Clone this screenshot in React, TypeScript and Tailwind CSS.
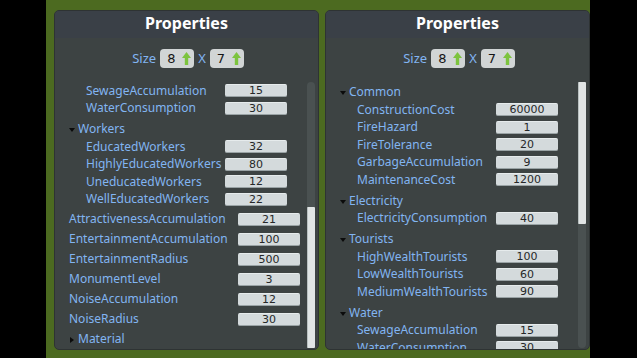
import React from "react";

const LABEL = "text-[#82b5f2] text-[12px] leading-none whitespace-nowrap";
const FONT = { fontFamily: '"Noto Sans", "Open Sans", sans-serif' };
const NUMFONT = { fontFamily: '"DejaVu Sans", "Liberation Sans", sans-serif' };

function ValueBox({ value }: { value: string }) {
  return (
    <div
      className="w-[62px] h-[13px] rounded-[2px] bg-[#d4dadc] border-t border-t-[#e6ebec] border-b border-b-[#9aa3a5] flex justify-center text-[11px] leading-[11px] text-[#262829]"
      style={NUMFONT}
    >
      {value}
    </div>
  );
}

function Item({ label, value }: { label: string; value: string }) {
  return (
    <div className="h-[17.5px] flex items-center shrink-0">
      <div className={`pl-[31px] w-[170px] ${LABEL}`}>{label}</div>
      <ValueBox value={value} />
    </div>
  );
}

function TopItem({ label, value }: { label: string; value: string }) {
  return (
    <div className="h-[20px] flex items-center shrink-0">
      <div className={`pl-[14px] w-[183px] ${LABEL}`}>{label}</div>
      <ValueBox value={value} />
    </div>
  );
}

function Header({ label, open = true, className = "" }: { label: string; open?: boolean; className?: string }) {
  return (
    <div className={`h-[18px] flex items-center pl-[13px] shrink-0 ${className}`}>
      <div className="w-[7px] flex justify-center mt-[2px]">
        {open ? (
          <svg width="6" height="4" viewBox="0 0 6 4">
            <polygon points="0,0 6,0 3,4" fill="#0b0b0b" />
          </svg>
        ) : (
          <svg width="4" height="6" viewBox="0 0 4 6">
            <polygon points="0,0 4,3 0,6" fill="#0b0b0b" />
          </svg>
        )}
      </div>
      <div className={`ml-[3px] ${LABEL}`}>{label}</div>
    </div>
  );
}

function Arrow() {
  return (
    <svg width="9" height="13" viewBox="0 0 9 13">
      <polygon points="0,6 4.5,0 9,6" fill="#7dc43e" />
      <rect x="2.8" y="5.5" width="3.4" height="7.5" fill="#7dc43e" />
    </svg>
  );
}

function SizeBox({ n }: { n: string }) {
  return (
    <div className="w-[34px] h-[19px] rounded-[4px] bg-[#d1d5d5] flex items-center pl-[7px] gap-[7px]">
      <span className="text-[13px] leading-none text-[#151515]" style={NUMFONT}>
        {n}
      </span>
      <Arrow />
    </div>
  );
}

function Panel({ children, thumbTop, thumbH }: { children: React.ReactNode; thumbTop: number; thumbH: number }) {
  return (
    <div className="w-[265px] h-[340px] rounded-[5px] bg-[#3d4343] border border-[#2e3333] overflow-hidden flex flex-col" style={FONT}>
      <div className="h-[27px] pb-[3px] bg-[#3a4047] flex items-center justify-center shrink-0">
        <span className="text-white text-[16px] font-bold leading-none">Properties</span>
      </div>
      <div className="pt-[11px] pb-[14px] pl-[3px] flex items-center justify-center shrink-0">
        <span className="text-[#82b5f2] text-[13px] leading-none mr-[4px]">Size</span>
        <SizeBox n="8" />
        <span className="text-[#82b5f2] text-[13px] leading-none mx-[4px]">X</span>
        <SizeBox n="7" />
      </div>
      <div className="flex-1 flex min-h-0">
        <div className="w-[252px] flex flex-col overflow-hidden">{children}</div>
        <div className="w-[8px] mb-[1px] rounded-t-[4px] rounded-b-[4px] bg-[#4a5151] flex flex-col">
          <div
            className="rounded-[1px] bg-[#e1e5e5] border-l border-[#b9c0c0] shrink-0"
            style={{ marginTop: thumbTop, height: thumbH }}
          />
        </div>
      </div>
    </div>
  );
}

export default function App() {
  return (
    <div className="w-[637px] h-[358px] flex bg-black overflow-hidden">
      <div className="w-[46px] bg-black" />
      <div className="w-[544px] h-[358px] bg-[#4c6a20] pl-[8px] pt-[10px] flex gap-[6px]">
        <Panel thumbTop={125} thumbH={141}>
          <Item label="SewageAccumulation" value="15" />
          <Item label="WaterConsumption" value="30" />
          <Header label="Workers" className="mt-[3px]" />
          <Item label="EducatedWorkers" value="32" />
          <Item label="HighlyEducatedWorkers" value="80" />
          <Item label="UneducatedWorkers" value="12" />
          <Item label="WellEducatedWorkers" value="22" />
          <div className="h-[1px] shrink-0" />
          <TopItem label="AttractivenessAccumulation" value="21" />
          <TopItem label="EntertainmentAccumulation" value="100" />
          <TopItem label="EntertainmentRadius" value="500" />
          <TopItem label="MonumentLevel" value="3" />
          <TopItem label="NoiseAccumulation" value="12" />
          <TopItem label="NoiseRadius" value="30" />
          <Header label="Material" open={false} className="mt-[1px]" />
        </Panel>
        <Panel thumbTop={0} thumbH={142}>
          <Header label="Common" className="mt-[1px]" />
          <Item label="ConstructionCost" value="60000" />
          <Item label="FireHazard" value="1" />
          <Item label="FireTolerance" value="20" />
          <Item label="GarbageAccumulation" value="9" />
          <Item label="MaintenanceCost" value="1200" />
          <Header label="Electricity" className="mt-[3px]" />
          <Item label="ElectricityConsumption" value="40" />
          <Header label="Tourists" className="mt-[3px]" />
          <Item label="HighWealthTourists" value="100" />
          <Item label="LowWealthTourists" value="60" />
          <Item label="MediumWealthTourists" value="90" />
          <Header label="Water" className="mt-[3px]" />
          <Item label="SewageAccumulation" value="15" />
          <Item label="WaterConsumption" value="30" />
        </Panel>
      </div>
      <div className="flex-1 bg-black" />
    </div>
  );
}
